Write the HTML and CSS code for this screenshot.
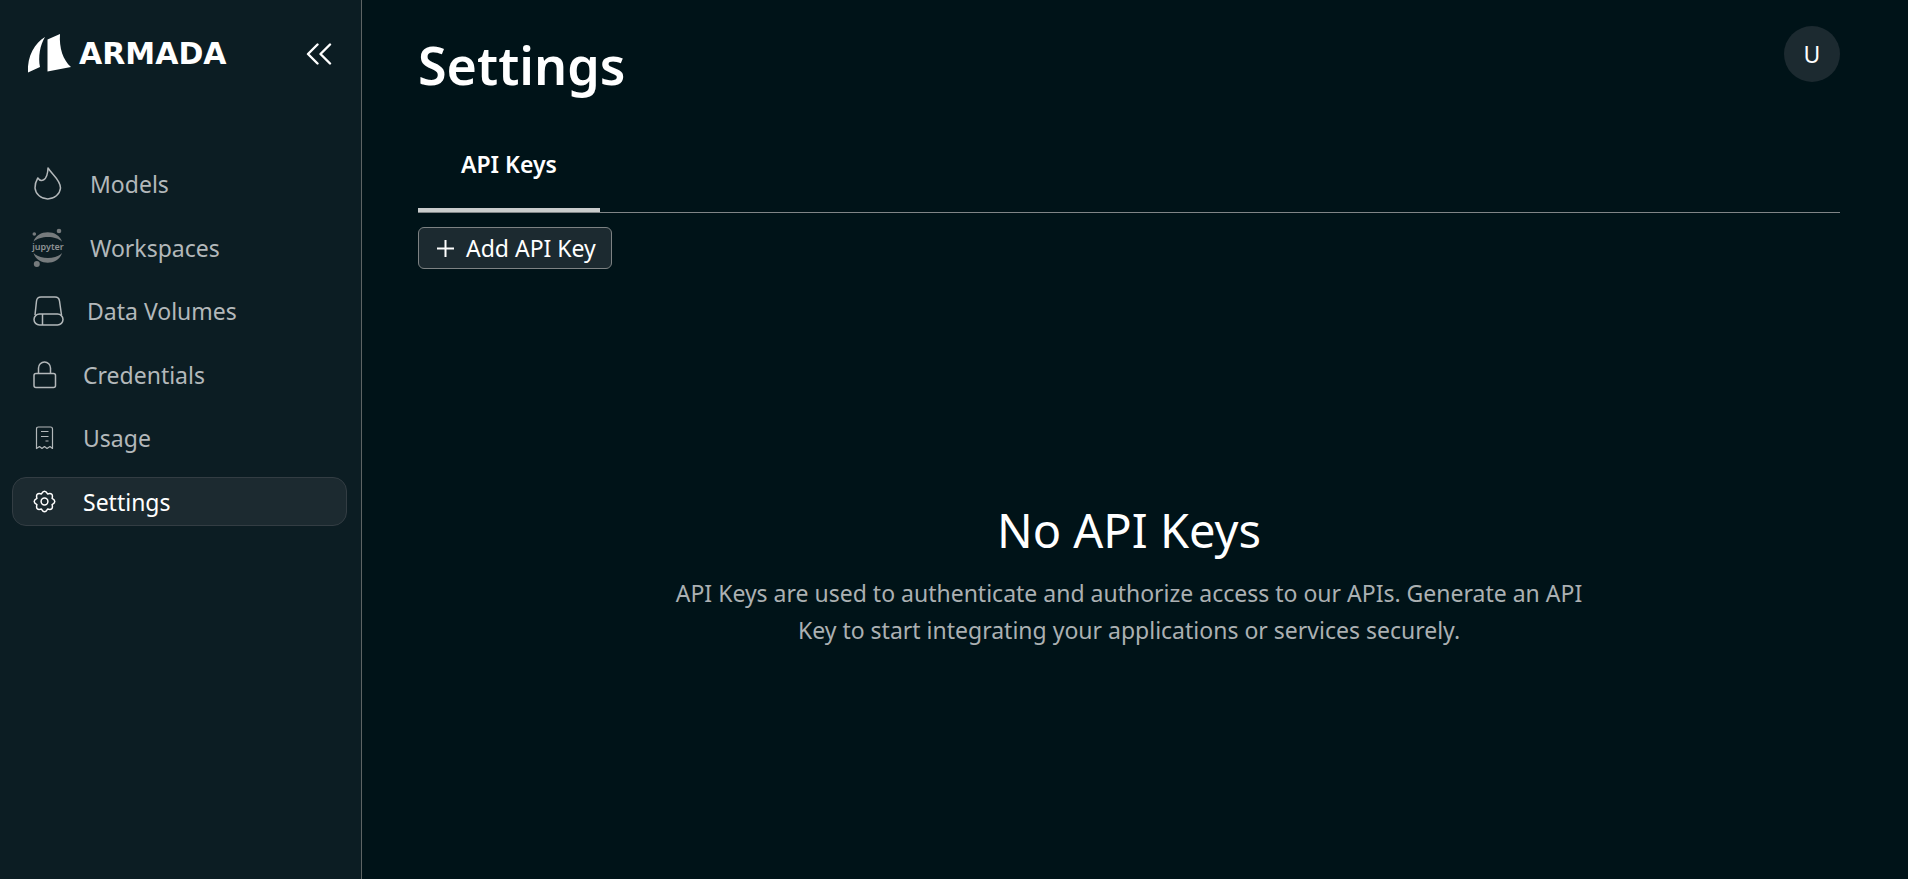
FILE: index.html
```html
<!DOCTYPE html>
<html lang="en">
<head>
<meta charset="utf-8">
<meta name="viewport" content="width=device-width, initial-scale=1">
<title>Armada – Settings</title>
<link rel="stylesheet" href="styles.css">
</head>
<body>
<div class="app">
  <aside class="sidebar">
    <div class="brand-row">
      <a class="brand" href="#" aria-label="Armada home">
        <svg class="brand-mark" width="44" height="40" viewBox="0 0 44 40" fill="#fff" aria-hidden="true">
          <path d="M18 3C8 9 0 22 1 38.500L13 33C11 23 13 11 18 3Z"/>
          <path d="M20.500 5.500L33 0C32 14 36 26 44 33L20.500 37.500Z"/>
        </svg>
        <span class="brand-name">ARMADA</span>
      </a>
      <button class="collapse" type="button" aria-label="Collapse sidebar">
        <svg width="26" height="22" viewBox="0 0 26 22" fill="none" stroke="#fff" stroke-width="2.400" stroke-linecap="round" stroke-linejoin="round" aria-hidden="true">
          <path d="M11.500 1.500L2 11L11.500 20.500M24 1.500L14.500 11L24 20.500"/>
        </svg>
      </button>
    </div>
    <nav class="nav" aria-label="Main">
      <a class="nav-item" href="#">
        <svg class="icon" width="31" height="36" viewBox="0 0 31 36" aria-hidden="true">
          <path d="M16 2C20.500 9 28.500 14 28.500 22A12.800 12 0 0 1 3 22C3 18 4 15 5.800 12C8.500 16 15.500 16 16 2Z"/>
        </svg>
        <span>Models</span>
      </a>
      <a class="nav-item" href="#">
        <svg class="icon" width="31" height="40" viewBox="0 0 31 40" aria-hidden="true">
          <g class="icon-solid">
            <path d="M1.500 13.800C5 1 26.500 1 30 13.800C24 7.500 8 7.500 1.500 13.800Z"/>
            <path d="M1.500 25C5 38 26.500 38 30 25C24 31.500 8 31.500 1.500 25Z"/>
            <circle cx="27" cy="3" r="2.300"/>
            <circle cx="2.300" cy="6" r="1.800"/>
            <circle cx="4.800" cy="36" r="3"/>
          </g>
          <text class="icon-word" x="16" y="21.500" text-anchor="middle">jupyter</text>
        </svg>
        <span>Workspaces</span>
      </a>
      <a class="nav-item" href="#">
        <svg class="icon" width="28" height="32" viewBox="0 0 28 32" aria-hidden="true">
          <path d="M3 20L4.500 6Q5 2 9 2H23Q27 2 27.500 6L29.500 20"/>
          <rect x="2" y="19" width="29" height="11" rx="5.500"/>
          <path d="M10.500 19V30"/>
        </svg>
        <span>Data Volumes</span>
      </a>
      <a class="nav-item" href="#">
        <svg class="icon" width="24" height="28" viewBox="0 0 24 28" aria-hidden="true">
          <rect x="2" y="12.500" width="21.500" height="14" rx="2"/>
          <path d="M6.500 12.500V7A6 6 0 0 1 18.500 7V12.500"/>
        </svg>
        <span>Credentials</span>
      </a>
      <a class="nav-item" href="#">
        <svg class="icon icon-fine" width="24" height="24" viewBox="0 0 24 24" aria-hidden="true">
          <path d="M4.500 22.500V3Q4.500 1 6.500 1H18.500Q20.500 1 20.500 3V22.500L18 20.500L15 22.500L12.500 20.500L10 22.500L7.500 20.500Z"/>
          <path d="M9 5.500H16.500M9 10.500H16.500M13.500 15H16.500"/>
        </svg>
        <span>Usage</span>
      </a>
      <a class="nav-item active" href="#" aria-current="page">
        <svg class="icon" width="24" height="24" viewBox="0 0 24 24" aria-hidden="true">
          <path d="M9.400 3.900Q12.500 -1.500 15.600 3.900Q21.700 2.300 20.100 8.400Q25.500 11.500 20.100 14.600Q21.700 20.700 15.600 19.100Q12.500 24.500 9.400 19.100Q3.300 20.700 4.900 14.600Q-0.500 11.500 4.900 8.400Q3.300 2.300 9.400 3.900Z"/>
          <circle cx="12.500" cy="11.500" r="3.400"/>
        </svg>
        <span>Settings</span>
      </a>
    </nav>
  </aside>

  <main class="main">
    <header class="page-header">
      <h1>Settings</h1>
      <button class="avatar" type="button" aria-label="User menu">U</button>
    </header>
    <div class="tabs" role="tablist">
      <button class="tab" type="button" role="tab" aria-selected="true">API Keys</button>
    </div>
    <button class="add-key" type="button">
      <svg width="17" height="17" viewBox="0 0 17 17" stroke="#fff" stroke-width="2" aria-hidden="true"><path d="M8.500 0V17M0 8.500H17"/></svg>
      <span>Add API Key</span>
    </button>
    <section class="empty">
      <h2>No API Keys</h2>
      <p>API Keys are used to authenticate and authorize access to our APIs. Generate an API Key to start integrating your applications or services securely.</p>
    </section>
  </main>
</div>
</body>
</html>
```
FILE: styles.css
```css
* {
  box-sizing: border-box;
}

body {
  margin: 0;
  background: #001318;
  color: #fff;
  font-family: "Segoe UI", "Noto Sans", "Open Sans", sans-serif;
  font-size: 23px;
  line-height: 32px;
}

button {
  font: inherit;
  color: inherit;
  cursor: pointer;
}

svg {
  display: block;
  flex: none;
}

.app {
  display: flex;
  min-height: 100vh;
}

.sidebar {
  flex: none;
  width: 362px;
  padding: 32px 14px 32px 12px;
  background: #0c1d23;
  border-right: 1px solid #5d6464;
}

.brand-row {
  display: flex;
  align-items: center;
  justify-content: space-between;
  height: 44px;
  padding: 0 15px;
}

.brand {
  display: flex;
  align-items: center;
  gap: 8px;
  color: #fff;
  text-decoration: none;
}

.brand-name {
  font-family: "DejaVu Sans", sans-serif;
  font-size: 30px;
  font-weight: 700;
}

.collapse {
  padding: 0;
  border: 0;
  background: none;
}

.nav {
  display: grid;
  grid-auto-rows: 49px;
  align-content: space-between;
  height: 367px;
  margin-top: 83px;
}

.nav-item {
  display: flex;
  align-items: center;
  gap: 27px;
  padding: 1px 19px 0;
  border: 1px solid transparent;
  border-radius: 14px;
  color: #b3b8ba;
  text-decoration: none;
}

.nav-item.active {
  border-color: #333d43;
  background: #1c2a30;
  color: #fff;
}

.icon {
  overflow: visible;
  fill: none;
  stroke: currentColor;
  stroke-width: 1.5;
  stroke-linejoin: round;
}

.icon-fine {
  stroke-width: 1.2;
}

.icon-solid {
  fill: #767b7d;
  stroke: none;
}

.icon-word {
  fill: #8d9294;
  stroke: none;
  font-size: 9px;
  font-weight: 600;
}

.main {
  flex: 1;
  display: flex;
  flex-direction: column;
  align-items: flex-start;
  padding: 26px 68px 32px 56px;
}

.page-header {
  display: flex;
  justify-content: space-between;
  align-items: flex-start;
  width: 100%;
}

h1 {
  margin: 0;
  font-size: 52px;
  font-weight: 600;
  line-height: 78px;
}

.avatar {
  width: 56px;
  height: 56px;
  padding: 0;
  border: 0;
  border-radius: 50%;
  background: #1c2a30;
}

.tabs {
  display: flex;
  width: 100%;
  margin-top: 26px;
  border-bottom: 1px solid #808587;
}

.tab {
  height: 82px;
  padding: 0 43px 10px;
  border: 0;
  border-bottom: 4px solid #c9cccc;
  background: none;
  font-weight: 600;
}

.add-key {
  display: flex;
  align-items: center;
  gap: 12px;
  height: 42px;
  margin-top: 14px;
  padding: 0 15px 0 18px;
  border: 1px solid #7d8283;
  border-radius: 6px;
  background: #1c2a30;
}

.empty {
  align-self: center;
  max-width: 928px;
  margin-top: 225px;
  text-align: center;
}

h2 {
  margin: 0;
  font-size: 47px;
  font-weight: 400;
  line-height: 72px;
}

p {
  margin: 9px 0 0;
  color: #abb0b2;
  line-height: 37px;
}
```
